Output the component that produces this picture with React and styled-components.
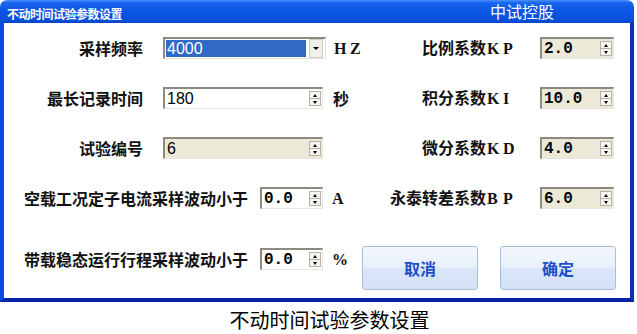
import React from 'react';
import styled, { createGlobalStyle } from 'styled-components';

const GlobalStyle = createGlobalStyle`
  body {
    margin: 0;
    background: #fff;
    font-family: "Noto Sans CJK SC", sans-serif;
  }
`;

const Page = styled.div`
  width: 637px;
  height: 334px;
  background: #fff;
`;

const Window = styled.div`
  width: 634px;
  height: 302px;
  display: flex;
  flex-direction: column;
`;

const TitleBar = styled.div`
  height: 23px;
  flex: none;
  display: flex;
  align-items: flex-start;
  border-radius: 7px 7px 0 0;
  background: linear-gradient(#4a92fb 0%, #1a66ee 12%, #0c58e6 40%, #0a50dc 85%, #0846c8 100%);
  color: #fff;
`;

const Title = styled.div`
  margin: 7px 0 0 7px;
  font-size: 12px;
  font-weight: bold;
  letter-spacing: -0.5px;
  line-height: 14px;
`;

const Brand = styled.div`
  margin: 2px 80px 0 auto;
  font-size: 16px;
  line-height: 19px;
`;

const Client = styled.div`
  flex: 1;
  display: flex;
  flex-direction: column;
  background: #fff;
  border-left: 4px solid #0a4be2;
  border-right: 4px solid #0a2eb4;
  border-bottom: 4px solid #0824a6;
`;

const Row = styled.div`
  height: 50px;
  display: flex;
  align-items: center;
`;

const LastRow = styled.div`
  flex: 1;
  display: flex;
  align-items: flex-start;
  padding-top: 23px;
`;

const LeftCell = styled.div`
  width: ${(p) => p.$w || 376}px;
  flex: none;
  display: flex;
  align-items: center;
  margin-top: ${(p) => p.$top || 0}px;
`;

const RightCell = styled.div`
  display: flex;
  align-items: center;
`;

const Label = styled.div`
  width: ${(p) => p.$w}px;
  flex: none;
  text-align: right;
  font-size: 16px;
  font-weight: bold;
  color: #111;
  line-height: 20px;
  white-space: nowrap;
  margin-right: ${(p) => p.$gap}px;
`;

const Wide = styled.span`
  display: inline-block;
  width: 16px;
  padding-left: 1px;
  box-sizing: border-box;
  text-align: left;
  font-family: "Liberation Serif", serif;
  font-size: 16px;
  font-weight: bold;
`;

const Unit = styled.div`
  margin-left: ${(p) => p.$gap}px;
  font-size: 16px;
  font-weight: bold;
  color: #111;
  line-height: 20px;
  white-space: nowrap;
`;

const Box = styled.div`
  box-sizing: border-box;
  width: ${(p) => p.$w}px;
  height: 22px;
  flex: none;
  display: flex;
  align-items: center;
  background: ${(p) => (p.$beige ? '#ece9d8' : '#fff')};
  border-top: 2px solid #8d8a7f;
  border-left: 2px solid #8d8a7f;
  border-right: 1px solid #e6e4dc;
  border-bottom: 1px solid #e6e4dc;
`;

const Value = styled.div`
  flex: 1;
  padding-left: 2px;
  color: #000;
  white-space: nowrap;
  font-family: ${(p) => (p.$mono ? '"Liberation Mono", monospace' : '"Liberation Sans", sans-serif')};
  font-size: 16px;
  font-weight: ${(p) => (p.$mono ? 'bold' : 'normal')};
  line-height: 18px;
`;

const Selected = styled(Value)`
  height: 17px;
  margin: 0 3px 0 1px;
  padding-left: 1px;
  background: #316ac5;
  color: #fff;
  line-height: 17px;
`;

const Spin = styled.div`
  width: 12px;
  height: 15px;
  margin-right: 1px;
  display: flex;
  flex-direction: column;
`;

const SpinHalf = styled.div`
  flex: 1;
  display: flex;
  align-items: center;
  justify-content: center;
  background: #f6f5f1;
  border: 1px solid #b4b1a6;
  &:first-child {
    border-bottom: none;
  }
  &::after {
    content: '';
    border-left: 2px solid transparent;
    border-right: 2px solid transparent;
    ${(p) => (p.$down ? 'border-top: 3px solid #000;' : 'border-bottom: 3px solid #000;')}
  }
`;

const DropButton = styled.div`
  width: 12px;
  height: 17px;
  margin-right: 2px;
  display: flex;
  align-items: center;
  justify-content: center;
  background: #f0efe9;
  border: 1px solid #cfccc0;
  &::after {
    content: '';
    border-left: 3px solid transparent;
    border-right: 3px solid transparent;
    border-top: 3px solid #000;
  }
`;

const Buttons = styled.div`
  display: flex;
  gap: 22px;
`;

const Button = styled.button`
  width: 116px;
  height: 44px;
  padding: 0;
  border: 1px solid #a9bedb;
  border-radius: 3px;
  background: linear-gradient(#f4f8fe 0%, #e8f0fc 48%, #dae6f8 52%, #d3e1f6 100%);
  color: #1d4fc8;
  font-family: "Noto Sans CJK SC", sans-serif;
  font-size: 16px;
  font-weight: bold;
`;

const Caption = styled.div`
  padding: 6px 0 0 22px;
  text-align: center;
  font-size: 20px;
  line-height: 24px;
  color: #000;
`;

const Spinner = ({ w, value, beige, mono }) => (
  <Box $w={w} $beige={beige}>
    <Value $mono={mono}>{value}</Value>
    <Spin>
      <SpinHalf />
      <SpinHalf $down />
    </Spin>
  </Box>
);

const CoefLabel = ({ text, letters }) => (
  <Label $w={138} $gap={22}>
    {text}
    {letters.map((l) => (
      <Wide key={l}>{l}</Wide>
    ))}
  </Label>
);

const coefs = [
  { text: '比例系数', letters: ['K', 'P'], value: '2.0' },
  { text: '积分系数', letters: ['K', 'I'], value: '10.0' },
  { text: '微分系数', letters: ['K', 'D'], value: '4.0' },
  { text: '永泰转差系数', letters: ['B', 'P'], value: '6.0' },
];

const CoefCell = ({ i }) => (
  <RightCell>
    <CoefLabel text={coefs[i].text} letters={coefs[i].letters} />
    <Spinner w={74} value={coefs[i].value} beige mono />
  </RightCell>
);

const App = () => (
  <Page>
    <GlobalStyle />
    <Window>
      <TitleBar>
        <Title>不动时间试验参数设置</Title>
        <Brand>中试控股</Brand>
      </TitleBar>
      <Client>
        <Row>
          <LeftCell>
            <Label $w={139} $gap={20}>采样频率</Label>
            <Box $w={163}>
              <Selected>4000</Selected>
              <DropButton />
            </Box>
            <Unit $gap={7}>
              <Wide>H</Wide>
              <Wide>Z</Wide>
            </Unit>
          </LeftCell>
          <CoefCell i={0} />
        </Row>
        <Row>
          <LeftCell>
            <Label $w={139} $gap={20}>最长记录时间</Label>
            <Spinner w={160} value="180" />
            <Unit $gap={10}>秒</Unit>
          </LeftCell>
          <CoefCell i={1} />
        </Row>
        <Row>
          <LeftCell>
            <Label $w={139} $gap={20}>试验编号</Label>
            <Spinner w={160} value="6" beige />
          </LeftCell>
          <CoefCell i={2} />
        </Row>
        <Row>
          <LeftCell>
            <Label $w={244} $gap={12}>空载工况定子电流采样波动小于</Label>
            <Spinner w={63} value="0.0" mono />
            <Unit $gap={8}>
              <Wide>A</Wide>
            </Unit>
          </LeftCell>
          <CoefCell i={3} />
        </Row>
        <LastRow>
          <LeftCell $w={358} $top={2}>
            <Label $w={244} $gap={12}>带载稳态运行行程采样波动小于</Label>
            <Spinner w={63} value="0.0" mono />
            <Unit $gap={8}>
              <Wide>%</Wide>
            </Unit>
          </LeftCell>
          <Buttons>
            <Button>取消</Button>
            <Button>确定</Button>
          </Buttons>
        </LastRow>
      </Client>
    </Window>
    <Caption>不动时间试验参数设置</Caption>
  </Page>
);

export default App;
